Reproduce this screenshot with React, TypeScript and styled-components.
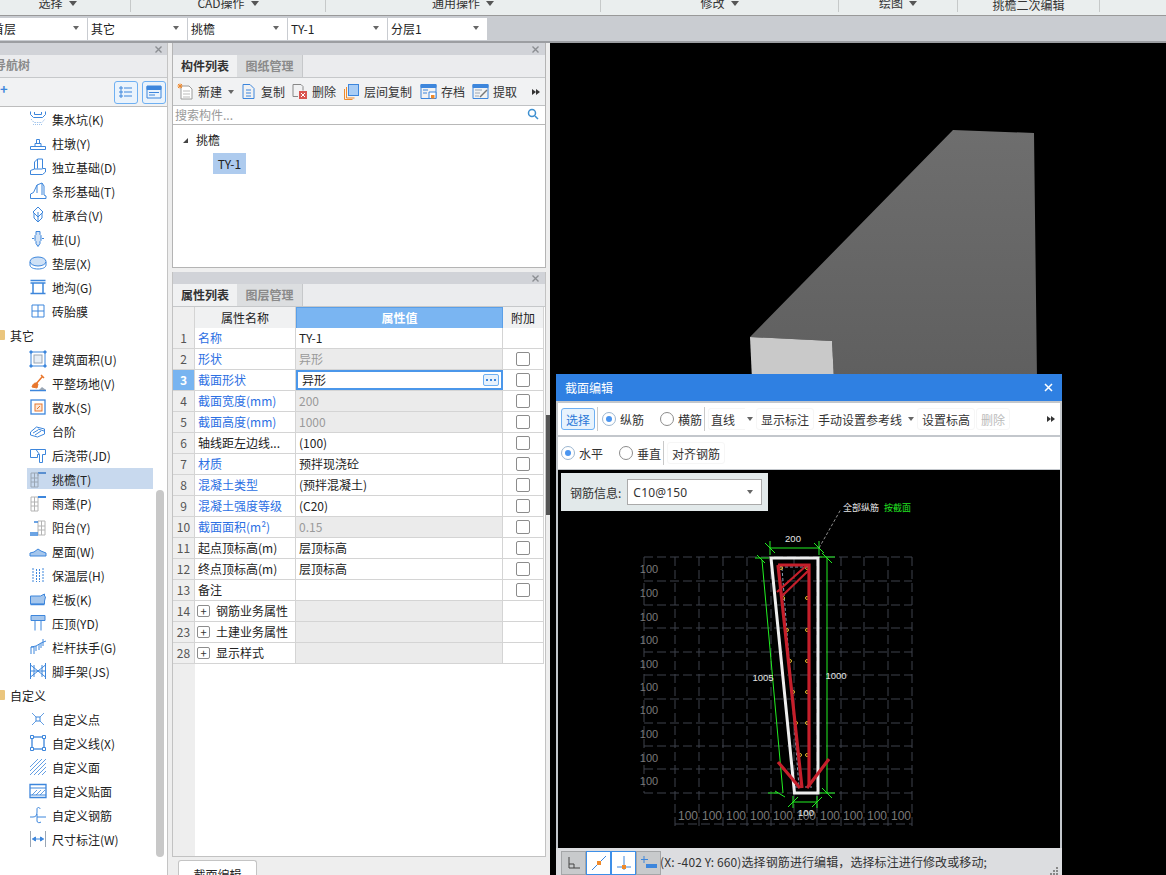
import React from "react";
import styled, { createGlobalStyle } from "styled-components";

const Global = createGlobalStyle`
  html, body { margin: 0; padding: 0; width: 1166px; height: 875px; overflow: hidden; background: #eeeeee; }
  * { box-sizing: border-box; }
  body { font-family: "Noto Sans CJK SC", "Noto Sans", sans-serif; font-size: 12px; color: #222; }
`;

const Page = styled.div`
  position: relative; width: 1166px; height: 875px; overflow: hidden;
  display: flex; flex-direction: column; background: #eee;
`;
const Ribbon = styled.div`
  height: 16px; flex: none; display: flex; overflow: hidden;
  background: #eaeeee; border-bottom: 1px solid #999;
`;
const RibbonGroup = styled.div<{ $w: number; $ml?: number }>`
  width: ${p => p.$w}px; margin-left: ${p => p.$ml ?? 0}px; height: 12px; flex: none;
  border-right: 1px solid #c6c9c9; display: flex; justify-content: center; gap: 6px;
  color: #333;
`;
const RibbonLabel = styled.span<{ $low?: boolean }>` line-height: 18px; margin-top: ${p => (p.$low ? -4 : -6)}px; height: 18px; `;
const RibbonCaret = styled.i`
  width: 0; height: 0; margin-top: 1px; border: 4px solid transparent; border-top: 5px solid #555; border-bottom: 0;
`;
const SelectBar = styled.div`
  height: 27px; flex: none; display: flex; gap: 1px; padding-top: 2px;
  background: #c9ccd1; border-bottom: 2px solid #9c9ea2;
`;
const SelectBox = styled.div<{ $first?: boolean }>`
  width: ${p => (p.$first ? 98 : 99)}px; height: 22px; flex: none; margin-left: ${p => (p.$first ? -11 : 0)}px; padding: 0 8px 2px 3px;
  background: #fff; display: flex; align-items: center; justify-content: space-between; color: #222;
`;
const SmallCaret = styled.i<{ $ml?: number }>`
  flex: none; width: 0; height: 0; margin-left: ${p => p.$ml ?? 0}px;
  border: 3px solid transparent; border-top: 4px solid #666; border-bottom: 0;
`;
const Main = styled.div` flex: 1; min-height: 0; display: flex; `;

/* left */
const Nav = styled.aside`
  position: relative; width: 168px; flex: none; display: flex; flex-direction: column;
  background: #fff; border-right: 1px solid #c4c4c4;
`;
const PanelHead = styled.div<{ $pr?: number }>`
  height: 12px; flex: none; background: #d1d3d8; display: flex; justify-content: flex-end; align-items: center;
  padding-right: ${p => p.$pr ?? 6}px;
`;
const Close = () => (
  <svg width="7" height="7" viewBox="0 0 7 7" stroke="#8b8e92" strokeWidth="1.4"><path d="M0.5 0.5l6 6M6.5 0.5l-6 6" /></svg>
);
const NavTitle = styled.div`
  height: 23px; flex: none; background: #ebecee; color: #8a8a8a; font-weight: 700; line-height: 20px;
  border-bottom: 1px solid #c6c8ca; padding-left: 0; text-indent: -6px; overflow: hidden;
`;
const NavTools = styled.div`
  height: 29px; flex: none; background: #f1f2f3; border-bottom: 1px solid #bdbdbd;
  display: flex; align-items: center; gap: 4px; padding: 0 1px 0 0;
`;
const Plus = styled.span` color: #3d86dc; font-weight: 700; font-size: 13px; margin-right: auto; line-height: 12px; margin-top: -7px; `;
const ViewBtn = styled.div`
  width: 24px; height: 23px; border: 1px solid #6fb0f2; border-radius: 3px; background: #eaf3fc;
  display: flex; align-items: center; justify-content: center;
`;
const NavList = styled.div` flex: 1; overflow: hidden; `;
const NavRow = styled.div<{ $sel?: boolean }>`
  height: 24px; display: flex; align-items: center; gap: 5px; position: relative; padding-left: 29px; z-index: 0;
  white-space: nowrap; color: #222;
  &::before {
    content: ""; position: absolute; z-index: -1; left: 27px; top: 1px; bottom: 2px; width: 126px;
    background: ${p => (p.$sel ? "#c8d9ee" : "transparent")};
  }
`;
const GroupRow = styled.div`
  height: 24px; display: flex; align-items: center; gap: 5px; white-space: nowrap;
`;
const Folder = styled.i` width: 5px; height: 10px; background: #eac57d; border-radius: 0 1px 1px 0; `;
const NavScroll = styled.div`
  position: absolute; left: 156px; top: 447px; width: 8px; height: 367px; border-radius: 4px; background: #c8c8c8;
`;

/* middle */
const Middle = styled.div`
  width: 374px; flex: none; margin-left: 4px; display: flex; flex-direction: column; background: #eee;
`;
const PanelTop = styled.section`
  height: 225px; flex: none; display: flex; flex-direction: column; background: #fff;
  border: 1px solid #b4b4b4; border-top: 0;
`;
const PanelBottom = styled.section`
  height: 585px; flex: none; margin-top: 4px; display: flex; flex-direction: column; background: #fff;
  border: 1px solid #c2c2c2; border-top: 0;
`;
const Tabs = styled.div`
  height: 23px; flex: none; display: flex; background: #ebecee; border-bottom: 1px solid #c6c8ca;
`;
const Tab = styled.div<{ $on?: boolean }>`
  width: ${p => (p.$on ? 64 : 66)}px; display: flex; align-items: center; justify-content: center; padding-bottom: 2px;
  font-weight: 700; color: ${p => (p.$on ? "#333" : "#8a8a8a")};
  background: ${p => (p.$on ? "#f0f1f2" : "#dcdee0")};
  border-right: ${p => (p.$on ? "0" : "1px solid #c6c8ca")};
`;
const ToolRow = styled.div`
  height: 28px; flex: none; display: flex; align-items: center; background: #f1f2f3; border-bottom: 1px solid #c0c2c4;
  color: #333;
`;
const Tool = styled.div<{ $ml: number }>`
  display: flex; align-items: center; gap: 4px; margin-left: ${p => p.$ml}px; white-space: nowrap;
`;
const MoreArrows = styled.div`
  display: flex; margin-left: auto; margin-right: 5px; flex: none;
  &::before, &::after { content: ""; width: 0; height: 0; border: 3px solid transparent; border-left: 4px solid #333; border-right: 0; }
`;
const Search = styled.div`
  height: 19px; flex: none; display: flex; align-items: center; justify-content: space-between; padding: 0 6px 2px 2px;
  color: #9a9a9a; border-bottom: 1px solid #b8b8b8;
`;
const Tree = styled.div` flex: 1; padding: 4px 0 0 10px; `;
const TreeHead = styled.div` display: flex; align-items: center; gap: 8px; height: 20px; `;
const TreeTri = styled.i`
  width: 0; height: 0; border-bottom: 5px solid #444; border-left: 5px solid transparent; margin-top: 2px;
`;
const TreeLeaf = styled.div`
  width: 33px; height: 21px; margin: 4px 0 0 30px; background: #aecbee; display: flex; align-items: center; justify-content: center; padding-bottom: 1px;
`;
const Row = styled.div`
  display: grid; grid-template-columns: 22px 101px 207px 41px; width: 371px; height: 21px; flex: none;
  border-bottom: 1px solid #d4d4d4; line-height: 20px;
`;
const NumCell = styled.div<{ $on?: boolean }>`
  background: ${p => (p.$on ? "#78b4f0" : "#efefef")}; color: ${p => (p.$on ? "#fff" : "#555")};
  font-weight: ${p => (p.$on ? 700 : 400)};
  font-size: 12px; text-align: center; border-right: 1px solid #d4d4d4;
`;
const NameCell = styled.div<{ $blue?: boolean; $head?: boolean }>`
  padding-left: ${p => (p.$head ? 0 : 3)}px; text-align: ${p => (p.$head ? "center" : "left")};
  color: ${p => (p.$blue ? "#2c6fe3" : "#222")}; background: ${p => (p.$head ? "#f0f1f2" : "#fff")};
  border-right: 1px solid #d4d4d4; white-space: nowrap; overflow: hidden; display: flex;
  align-items: center; justify-content: ${p => (p.$head ? "center" : "flex-start")};
`;
const ValueCell = styled.div<{ $grey?: boolean }>`
  padding-left: 3px; background: ${p => (p.$grey ? "#ebebeb" : "#fff")}; color: ${p => (p.$grey ? "#9a9a9a" : "#222")};
  border-right: 1px solid #d4d4d4; white-space: nowrap;
`;
const ValueHead = styled.div`
  background: #7ab5f2; color: #fff; font-weight: 700; text-align: center; border: 1px solid #5a9fe8;
`;
const ValueEdit = styled.div`
  border: 2px solid #4b97ea; background: #fff; display: flex; align-items: center; justify-content: space-between;
  padding: 0 2px 0 4px; line-height: 16px; color: #222;
`;
const DotsBtn = styled.span`
  width: 16px; height: 12px; border: 1px solid #6fb0f2; border-radius: 2px; background: #e8f2fc;
  display: flex; align-items: center; justify-content: center; gap: 2px;
`;
const Dot = styled.i` width: 2px; height: 2px; background: #3d86dc; display: block; `;
const ExtraCell = styled.div<{ $head?: boolean }>`
  display: flex; align-items: center; justify-content: center; background: ${p => (p.$head ? "#f0f1f2" : "#fff")};
  border-right: 1px solid #d4d4d4;
`;
const Check = styled.i`
  width: 14px; height: 14px; border: 1px solid #8c8c8c; border-radius: 2px; background: #fff; display: block;
`;
const Expander = styled.span`
  width: 13px; height: 12px; border: 1px solid #8c8c8c; border-radius: 2px; display: inline-flex; align-items: center; justify-content: center;
  font-size: 11px; line-height: 10px; margin: 0 6px 0 -1px; color: #333; flex: none;
`;
const Filler = styled.div` flex: 1; border-left: 22px solid #eee; background: #fff; `;
const BottomStrip = styled.div` flex: 1; padding: 3px 0 0 6px; background: #eee; overflow: hidden; `;
const BottomTab = styled.div`
  width: 79px; height: 24px; background: #fff; border: 1px solid #c4c4c4; border-bottom: 0; border-radius: 3px 3px 0 0;
  display: flex; align-items: center; justify-content: center; padding-top: 3px;
`;
const Gutter = styled.div` width: 4px; flex: none; background: #eee; `;
const Handle = styled.div` width: 4px; height: 100px; margin-top: 372px; background: #555; `;
const Viewport = styled.div` flex: 1; background: #000; overflow: hidden; `;
const ViewSvg = styled.svg` display: block; `;

/* dialog */
const Dialog = styled.div`
  position: absolute; left: 556px; top: 374px; width: 506px; height: 510px; background: #c3c7cc;
  display: flex; flex-direction: column; padding: 0 2px;
`;
const DialogTitle = styled.div`
  height: 27px; flex: none; margin: 0 -2px 2px; background: #2f80e2; color: #fff; padding: 0 9px;
  display: flex; align-items: center; justify-content: space-between; font-size: 12px;
`;
const DTool = styled.div<{ $mb: number }>`
  height: 32px; flex: none; margin-bottom: ${p => p.$mb}px; background: #fff; display: flex; align-items: center; color: #333;
`;
const DBtn = styled.div<{ $ml?: number; $on?: boolean; $off?: boolean }>`
  margin-left: ${p => p.$ml ?? 0}px; height: 22px; padding: 0 4px; display: flex; align-items: center; white-space: nowrap; flex: none;
  border: 1px solid ${p => (p.$on ? "#6fb0f2" : "#f6f6f6")}; border-radius: 3px;
  background: ${p => (p.$on ? "#e8f3fd" : "#fff")};
  color: ${p => (p.$on ? "#2a78d8" : p.$off ? "#bbb" : "#333")};
`;
const DSep = styled.i<{ $ml?: number }>` width: 1px; height: 24px; background: #c9c9c9; margin-left: ${p => p.$ml ?? 0}px; flex: none; `;
const RadioWrap = styled.label<{ $ml: number }>`
  display: flex; align-items: center; gap: 4px; margin-left: ${p => p.$ml}px; white-space: nowrap; flex: none;
`;
const Radio = styled.i<{ $on?: boolean }>`
  width: 14px; height: 14px; border-radius: 50%; border: 1px solid ${p => (p.$on ? "#9cb6d0" : "#8c8c8c")}; background: #fff;
  display: flex; align-items: center; justify-content: center;
  &::after { content: ""; width: 6px; height: 6px; border-radius: 50%; background: ${p => (p.$on ? "#4a95f0" : "transparent")}; }
`;
const ComboText = styled.div<{ $ml?: number; $w?: number }>`
  margin-left: ${p => p.$ml ?? 0}px; width: ${p => (p.$w ? p.$w + "px" : "auto")}; height: 22px; padding-left: 2px; flex: none;
  display: flex; align-items: center; white-space: nowrap; border: 1px solid #f6f6f6; border-right: 0; border-radius: 3px 0 0 3px;
`;
const PlainLabel = styled.span` margin-left: 4px; flex: none; `;
const Canvas = styled.div` position: relative; height: 378px; flex: none; background: #000; overflow: hidden; `;
const SectionSvg = styled.svg` display: block; `;
const InfoPanel = styled.div`
  position: absolute; left: 3px; top: 3px; width: 207px; height: 38px; background: #e2e9ea;
  display: flex; align-items: center; padding-left: 9px; gap: 6px; color: #333;
`;
const InfoSelect = styled.div`
  width: 135px; height: 26px; background: #fff; border: 1px solid #aaa; display: flex; align-items: center; justify-content: space-between;
  padding: 0 8px 0 5px; color: #333; font-family: "Noto Sans", sans-serif; letter-spacing: 0.2px;
`;
const Status = styled.div`
  height: 27px; flex: none; margin: 0 -2px; padding-left: 5px; background: #dcdde0; display: flex; align-items: flex-start; color: #333;
  position: relative;
`;
const SnapBtn = styled.div<{ $on?: boolean }>`
  width: 25px; height: 24px; margin-top: 3px; flex: none; display: flex; align-items: center; justify-content: center;
  background: ${p => (p.$on ? "#fff" : "#c8cacc")}; border: 1px solid ${p => (p.$on ? "#3d8fe8" : "#a4a6a8")};
`;
const StatusText = styled.div` margin: 5px 0 0 -1px; white-space: nowrap; line-height: 18px; letter-spacing: 0.1px; `;
const Grip = styled.svg` position: absolute; right: 3px; bottom: 0; `;

const Ic = styled.svg` width: 18px; height: 18px; flex: none; fill: none; stroke: #3d86dc; stroke-width: 1; `;
const TI = styled.svg` width: 17px; height: 17px; flex: none; fill: none; stroke-width: 1; `;

const B = "#3d86dc", G = "#9aa6b4", O = "#e8762c";
const icons: Record<string, React.ReactNode> = {
  pit: <><path d="M1.5 1.5v3l3 3h9l3-3v-3" /><path d="M5.5 2v2.5h7V2" /><path d="M2 9l3 3.5h8l3-3.5" stroke="#9fc3ec" strokeDasharray="1.5 1" /><path d="M4 14.5h10" stroke="#9fc3ec" strokeDasharray="1 1" /></>,
  pier: <><path d="M1.5 12.5h15v3h-15z" /><path d="M6 12.5v-3h6v3M7.5 9.5V5.5h3v4" /></>,
  found: <><path d="M1.5 16.5v-4l4-1.5V4l3-3h5v9.5h3v3.5l-3 2.5z" /><path d="M5.5 11h8M8.5 1v9.5" /></>,
  strip: <><path d="M1.5 16.5v-4.5l3-1.5L8 3l5-2 2 3v9l2 1v2.5z" /><path d="M13 1v12M8 3v8" /></>,
  cap: <><path d="M9 1l5 5-5 5-5-5z" /><path d="M5 7v5l4 4 4-4V7M9 6v10" /></>,
  pile: <><path d="M7 1.5h4v3l1 1v5l-1 1v2l-2 3-2-3v-2l-1-1v-5l1-1z" fill="#cfe1f6" /><path d="M3 8.5h2M13 8.5h2" /></>,
  pad: <><ellipse cx="9" cy="7.5" rx="8" ry="4.5" fill="#cfe1f6" /><path d="M1 8v3c0 2.5 3.5 4 8 4s8-1.5 8-4V8" /></>,
  trench: <><path d="M1.5 2.5h15M1.5 5h15" strokeWidth="1.5" /><path d="M4 5v10M14 5v10M1.5 15.5h15" strokeWidth="1.5" /></>,
  brick: <path d="M3 3h12v12H3zM9 3v12M3 9h12" />,
  area: <><rect x="2" y="2" width="14" height="14" /><rect x="5" y="5" width="8" height="8" stroke={G} fill="#e8eef5" /><path d="M1 1h2v2H1zM15 1h2v2h-2zM1 15h2v2H1zM15 15h2v2h-2z" fill={B} /></>,
  level: <><path d="M7 10l6-7M12 1l3 3" stroke={O} strokeWidth="1.5" /><path d="M3 13c1-4 4-5 6-3l-1 4z" fill={O} stroke={O} /><path d="M1 16.5h16" stroke={B} strokeWidth="1.5" /><path d="M10 16l3-3 4 3z" fill="#9aa6b4" stroke="none" /></>,
  apron: <><rect x="2" y="2" width="14" height="14" strokeWidth="1.3" /><rect x="6" y="6" width="7" height="7" stroke={O} fill="#fbe6d6" /><path d="M11 8l-3 3" stroke={O} /></>,
  step: <><path d="M1.5 10l6-5 8 2v5l-7 3-7-2z" /><path d="M4 11l5-3M6 13l6-4M9 7l6 2" /></>,
  band: <><path d="M1.5 3.5h15v5h-3v8h-3v-8h-2v3h-7z" fill="#fff" /><path d="M7 3.5l3.5 5" /></>,
  eave: <><path d="M2 3h7v14H2zM2 8h7M2 12h7M5.5 3v14" stroke={G} /><path d="M9 3h8" stroke="#5a8fd0" strokeWidth="2" /><path d="M9 3v3" stroke={G} /></>,
  canopy: <><path d="M2 3h7v14H2zM2 8h7M2 12h7M5.5 3v14" stroke="#b4b4b4" /><path d="M9 3h8" stroke={B} strokeWidth="2" /></>,
  balcony: <><path d="M9 3h7v14H9zM9 8h7M9 12h7M12.5 3v14" stroke="#b4b4b4" /><path d="M1 15h8M1 17h8M5 4h4" stroke={B} strokeWidth="1.5" /></>,
  roof: <path d="M1 14v-3l4-1 4-3 3 2 5 2v3z" fill="#a5c6ec" strokeWidth="1" />,
  insul: <path d="M4 2v14M14 2v14M7.5 3v13M10.5 3v13" strokeDasharray="2 1" />,
  parapet: <><path d="M1.5 6h10l4-2v2l1 1-1 4v3h-14z" fill="#a5c6ec" /><path d="M1.5 14.5h14" strokeWidth="1.5" /></>,
  coping: <><path d="M2 1.5h14v5H2z" fill="#a5c6ec" /><path d="M6 6.5v10M12 6.5v10" /></>,
  rail: <><path d="M2 16V9l5-1v5M7 8l5-3v5M12 5l5-2M2 9h3M5 9v7M10 6v6M14 1v7" /></>,
  scaffold: <><path d="M1.5 1v16M16.5 1v16M1.5 3l15 12M16.5 3l-15 12M5 3v12M13 3v12M1.5 9h15" /></>,
  point: <><path d="M3 3l12 12M15 3L3 15" strokeWidth="0.8" /><rect x="7" y="7" width="4" height="4" fill="#fff" /></>,
  line: <><rect x="3" y="3" width="12" height="12" strokeWidth="1.3" /><path d="M1.5 1.5h3v3h-3zM13.5 1.5h3v3h-3zM1.5 13.5h3v3h-3zM13.5 13.5h3v3h-3z" fill="#fff" /></>,
  face: <path d="M1 9l8-8M1 13l12-12M1 17L17 1M5 17L17 5M9 17l8-8M13 17l4-4" strokeWidth="0.8" />,
  stick: <><path d="M1 2.5h16v13H1z" strokeWidth="1.3" /><path d="M1 6h16" /><path d="M3 13l5-5M7 13l5-5M11 13l5-5" strokeWidth="0.8" /><path d="M1 13h16" /></>,
  rebar: <><path d="M1 11h3c3 0 4-2 4-5V3c0-2 3-2 3 0M8 8v7c0 2 3 2 4 1M8 11h9" /></>,
  dim: <><path d="M1.5 1v16M16.5 1v16" stroke={G} /><path d="M3.5 9h11M3.5 9l3-2v4zM14.5 9l-3-2v4z" fill={B} /></>,
};

const rows: any[] = [
  [1, "名称", "TY-1", { blue: 1, noCheck: 1 }],
  [2, "形状", "异形", { blue: 1, grey: 1 }],
  [3, "截面形状", "异形", { blue: 1, edit: 1 }],
  [4, "截面宽度(mm)", "200", { blue: 1, grey: 1 }],
  [5, "截面高度(mm)", "1000", { blue: 1, grey: 1 }],
  [6, "轴线距左边线...", "(100)", {}],
  [7, "材质", "预拌现浇砼", { blue: 1 }],
  [8, "混凝土类型", "(预拌混凝土)", { blue: 1 }],
  [9, "混凝土强度等级", "(C20)", { blue: 1 }],
  [10, "截面面积(m²)", "0.15", { blue: 1, grey: 1 }],
  [11, "起点顶标高(m)", "层顶标高", {}],
  [12, "终点顶标高(m)", "层顶标高", {}],
  [13, "备注", "", {}],
  [14, "钢筋业务属性", "", { group: 1 }],
  [23, "土建业务属性", "", { group: 1 }],
  [28, "显示样式", "", { group: 1 }],
];

const nav: [string, string, boolean?][] = [
  ["集水坑(K)", "pit"], ["柱墩(Y)", "pier"], ["独立基础(D)", "found"], ["条形基础(T)", "strip"], ["桩承台(V)", "cap"],
  ["桩(U)", "pile"], ["垫层(X)", "pad"], ["地沟(G)", "trench"], ["砖胎膜", "brick"],
];
const nav2: [string, string, boolean?][] = [
  ["建筑面积(U)", "area"], ["平整场地(V)", "level"], ["散水(S)", "apron"], ["台阶", "step"], ["后浇带(JD)", "band"], ["挑檐(T)", "eave", true],
  ["雨蓬(P)", "canopy"], ["阳台(Y)", "balcony"], ["屋面(W)", "roof"], ["保温层(H)", "insul"], ["栏板(K)", "parapet"], ["压顶(YD)", "coping"],
  ["栏杆扶手(G)", "rail"], ["脚手架(JS)", "scaffold"],
];
const nav3: [string, string, boolean?][] = [
  ["自定义点", "point"], ["自定义线(X)", "line"], ["自定义面", "face"], ["自定义贴面", "stick"], ["自定义钢筋", "rebar"], ["尺寸标注(W)", "dim"],
];
const renderNav = (list: [string, string, boolean?][]) =>
  list.map(([t, ic, sel]) => (
    <NavRow key={t} $sel={sel}>
      <Ic viewBox="0 0 18 18">{icons[ic]}</Ic>
      <span>{t}</span>
    </NavRow>
  ));

const hy = [557, 581, 605, 628, 652, 675, 699, 723, 746, 769, 793];
const vx = [675, 699, 723, 747, 771, 794, 817, 841, 864, 888, 912];
const ly = [569, 593, 617, 640, 664, 687, 710, 734, 758, 781];
const bx = [688, 712, 736, 760, 783, 806, 830, 853, 877, 901];
const dy = [598, 630, 661, 692, 723, 755];
const dl = [783, 787, 790, 793, 796, 800];

const Section = () => (
  <SectionSvg width="502" height="378" viewBox="558 470 502 378" fontFamily="Liberation Sans, sans-serif">
    <g stroke="#3f434c" strokeWidth="1" strokeDasharray="9 4" fill="none">
      {hy.map(y => <path key={y} d={`M644 ${y}H912`} />)}
      <path d="M675 824H912" />
      <path d="M644 557V793" />
      {vx.map(x => <path key={x} d={`M${x} 557V826`} />)}
    </g>
    <g fill="#7a7a7a" textAnchor="middle">
      <g fontSize="11">{ly.map(y => <text key={y} x="649" y={y + 4}>100</text>)}</g>
      <g fontSize="12">{bx.map(x => <text key={x} x={x} y="820">100</text>)}</g>
    </g>
    <g stroke="#22f022" strokeWidth="1" fill="none">
      <path d="M770 548H819M770 541v14M819 541v14M765 543l10 10M814 543l10 10" />
      <path d="M827 558V793M819 557h16M819 793h16M822 788l10 10M822 553l10 10" />
      <path d="M762 560L783 793M755 558h14M778 793h-10M775 791l10 6M757 555l8 8" />
      <path d="M793 802H817M793 796v12M817 796v12M788 807l10-10M812 807l10-10" />
    </g>
    <path d="M771 558H818V793H794.5Z" fill="none" stroke="#eeeeee" strokeWidth="3" />
    <path d="M782 568L799 787M809 568V787M780 567H810M795 787H812" fill="none" stroke="#a9c4e4" strokeWidth="0.8" strokeDasharray="3 2" />
    <g fill="none" stroke="#e6bd2e" strokeWidth="1">
      <circle cx="781" cy="568" r="1.5" />
      <circle cx="807" cy="568" r="1.5" />
      {dy.map((y, i) => <circle key={y} cx={dl[i]} cy={y} r="1.5" />)}
      {dy.map(y => <circle key={y} cx="807" cy={y} r="1.5" />)}
    </g>
    <g fill="none" stroke="#c51f2b" strokeWidth="3.2">
      <path d="M778 565H809V787" />
      <path d="M778 565L781 592L802 788" />
      <path d="M807 565L777 592M809 570L782 596" strokeWidth="2.2" />
      <path d="M778 762L800 788M829 759L807 788" />
    </g>
    <path d="M819 548L841 509" stroke="#8d8d8d" strokeDasharray="3 2" fill="none" />
    <text x="843" y="511" fill="#e6e6e6" fontSize="9" fontFamily="Noto Sans CJK SC, sans-serif">全部纵筋</text>
    <text x="884" y="511" fill="#22e022" fontSize="9" fontFamily="Noto Sans CJK SC, sans-serif">按截面</text>
    <g fill="#e4e4e4" fontSize="9.5" textAnchor="middle">
      <text x="793" y="542">200</text>
      <text x="836" y="679">1000</text>
      <text x="763" y="681">1005</text>
      <text x="806" y="816">100</text>
    </g>
  </SectionSvg>
);

export default function App() {
  return (
    <Page>
      <Global />
      <Ribbon>
        {[["选择", 146, -15], ["CAD操作", 195], ["通用操作", 275], ["修改", 238], ["绘图", 119]].map(([t, w, ml]) => (
          <RibbonGroup key={t as string} $w={w as number} $ml={ml as number | undefined}>
            <RibbonLabel>{t}</RibbonLabel><RibbonCaret />
          </RibbonGroup>
        ))}
        <RibbonGroup $w={142}><RibbonLabel $low>挑檐二次编辑</RibbonLabel></RibbonGroup>
      </Ribbon>
      <SelectBar>
        {["首层", "其它", "挑檐", "TY-1", "分层1"].map((t, i) => (
          <SelectBox key={t} $first={i === 0}>{t}<SmallCaret /></SelectBox>
        ))}
      </SelectBar>
      <Main>
        <Nav>
          <PanelHead $pr={5}><Close /></PanelHead>
          <NavTitle>导航树</NavTitle>
          <NavTools>
            <Plus>+</Plus>
            <ViewBtn>
              <svg width="14" height="14" viewBox="0 0 14 14" fill="none" stroke="#3d86dc"><path d="M1 2h2v2H1zM1 6h2v2H1zM1 10h2v2H1zM5 3h8M5 7h8M5 11h8" /></svg>
            </ViewBtn>
            <ViewBtn>
              <svg width="16" height="14" viewBox="0 0 16 14" fill="none" stroke="#3d86dc"><path d="M1 1h14v12H1z" /><path d="M1 1.5h14v3H1z" fill="#3d86dc" /><path d="M3 7.5h10M3 10h6" /></svg>
            </ViewBtn>
          </NavTools>
          <NavList>
            {renderNav(nav)}
            <GroupRow><Folder />其它</GroupRow>
            {renderNav(nav2)}
            <GroupRow><Folder />自定义</GroupRow>
            {renderNav(nav3)}
          </NavList>
          <NavScroll />
        </Nav>
        <Middle>
          <PanelTop>
            <PanelHead><Close /></PanelHead>
            <Tabs><Tab $on>构件列表</Tab><Tab>图纸管理</Tab></Tabs>
            <ToolRow>
              <Tool $ml={4}>
                <TI viewBox="0 0 17 17"><path d="M4 3h8l3 3v10H4z" stroke="#9a9a9a" fill="#fff" /><path d="M1 1l4 4M5 1L1 5M3 .5v5M.5 3h5" stroke="#f0892c" /><path d="M6 8h7M6 11h7M6 14h7" stroke="#bbb" /></TI>
                新建<SmallCaret $ml={2} />
              </Tool>
              <Tool $ml={6}>
                <TI viewBox="0 0 17 17"><path d="M3 1.5h7l4 4v10H3z" stroke={B} /><path d="M6 7h5M6 10h5M6 13h5" stroke={B} /></TI>
                复制
              </Tool>
              <Tool $ml={6}>
                <TI viewBox="0 0 17 17"><path d="M2 1.5h8l2 2v4M2 1.5v12h5" stroke="#888" /><rect x="8" y="8" width="8" height="8" fill="#d9534f" /><path d="M10 10l4 4M14 10l-4 4" stroke="#fff" /></TI>
                删除
              </Tool>
              <Tool $ml={7}>
                <TI viewBox="0 0 17 17"><rect x="5.5" y="1.5" width="10" height="11" fill="#a9cdf5" stroke={B} /><path d="M3.5 4v11h8M1.5 6v10.5h8" stroke="#ef8a2a" /></TI>
                层间复制
              </Tool>
              <Tool $ml={8}>
                <TI viewBox="0 0 17 17"><path d="M1 1.5h15v14H1z" stroke={B} /><path d="M1 1.5h15v3H1z" fill={B} stroke={B} /><path d="M3 7h5M3 10h4" stroke={B} /><path d="M9 9h7v6.5H9z" stroke={B} fill="#fff" /><rect x="11" y="12" width="3.5" height="3.5" fill="#ef8a2a" /></TI>
                存档
              </Tool>
              <Tool $ml={7}>
                <TI viewBox="0 0 17 17"><path d="M1 1.5h15v14H1z" stroke={B} /><path d="M1 1.5h15v3H1z" fill={B} stroke={B} /><path d="M3 7h7M3 10h5M3 13h4" stroke={G} /><path d="M8 14l7-7" stroke="#777" strokeWidth="1.5" /></TI>
                提取
              </Tool>
              <MoreArrows />
            </ToolRow>
            <Search>
              搜索构件...
              <svg width="12" height="12" viewBox="0 0 12 12" fill="none" stroke="#3d8fd0" strokeWidth="1.5"><circle cx="5" cy="5" r="3.5" /><path d="M8 8l3 3" /></svg>
            </Search>
            <Tree>
              <TreeHead><TreeTri />挑檐</TreeHead>
              <TreeLeaf>TY-1</TreeLeaf>
            </Tree>
          </PanelTop>
          <PanelBottom>
            <PanelHead><Close /></PanelHead>
            <Tabs><Tab $on>属性列表</Tab><Tab>图层管理</Tab></Tabs>
            <Row>
              <NumCell />
              <NameCell $head>属性名称</NameCell>
              <ValueHead>属性值</ValueHead>
              <ExtraCell $head>附加</ExtraCell>
            </Row>
            {rows.map(([n, name, val, o]) => (
              <Row key={n}>
                <NumCell $on={!!o.edit}>{n}</NumCell>
                <NameCell $blue={!!o.blue}>
                  {o.group ? <Expander>+</Expander> : null}
                  {name}
                </NameCell>
                {o.edit ? (
                  <ValueEdit>{val}<DotsBtn><Dot /><Dot /><Dot /></DotsBtn></ValueEdit>
                ) : (
                  <ValueCell $grey={!!o.grey || !!o.group}>{val}</ValueCell>
                )}
                <ExtraCell>{o.noCheck || o.group ? null : <Check />}</ExtraCell>
              </Row>
            ))}
            <Filler />
          </PanelBottom>
          <BottomStrip><BottomTab>截面编辑</BottomTab></BottomStrip>
        </Middle>
        <Gutter><Handle /></Gutter>
        <Viewport>
          <ViewSvg width="616" height="832" viewBox="550 43 616 832">
            <defs>
              <linearGradient id="g3d" x1="0" y1="0" x2="0" y2="1">
                <stop offset="0" stopColor="#6e6e6e" />
                <stop offset="1" stopColor="#5f5f5f" />
              </linearGradient>
            </defs>
            <path d="M750 337L953 130L1034 133L1037 380H834L832 341Z" fill="url(#g3d)" />
            <path d="M750 337L832 341L834 380H752Z" fill="#c9c9c9" />
          </ViewSvg>
        </Viewport>
      </Main>
      <Dialog>
        <DialogTitle>
          截面编辑
          <svg width="9" height="9" viewBox="0 0 9 9" stroke="#fff" strokeWidth="1.5"><path d="M1 1l7 7M8 1L1 8" /></svg>
        </DialogTitle>
        <DTool $mb={2}>
          <DBtn $ml={3} $on>选择</DBtn>
          <DSep $ml={2} />
          <RadioWrap $ml={4}><Radio $on />纵筋</RadioWrap>
          <RadioWrap $ml={16}><Radio />横筋</RadioWrap>
          <DSep $ml={2} />
          <ComboText $ml={3} $w={37}>直线</ComboText>
          <SmallCaret $ml={2} />
          <DBtn $ml={3}>显示标注</DBtn>
          <PlainLabel>手动设置参考线</PlainLabel>
          <SmallCaret $ml={6} />
          <DBtn $ml={3}>设置标高</DBtn>
          <DBtn $ml={1} $off>删除</DBtn>
          <MoreArrows />
        </DTool>
        <DTool $mb={1}>
          <RadioWrap $ml={3}><Radio $on />水平</RadioWrap>
          <RadioWrap $ml={16}><Radio />垂直</RadioWrap>
          <DSep $ml={2} />
          <DBtn $ml={3}>对齐钢筋</DBtn>
        </DTool>
        <Canvas>
          <Section />
          <InfoPanel>
            钢筋信息:
            <InfoSelect>C10@150<SmallCaret /></InfoSelect>
          </InfoPanel>
        </Canvas>
        <Status>
          <SnapBtn>
            <svg width="14" height="14" viewBox="0 0 14 14" fill="none" stroke="#444"><path d="M2 1v11h11M2 8h5v4" /></svg>
          </SnapBtn>
          <SnapBtn $on>
            <svg width="16" height="16" viewBox="0 0 16 16" fill="none" stroke="#3d86dc"><path d="M1 15L15 1" /><rect x="6" y="6" width="4" height="4" fill="#ef8a2a" stroke="none" /></svg>
          </SnapBtn>
          <SnapBtn $on>
            <svg width="16" height="16" viewBox="0 0 16 16" fill="none" stroke="#3d86dc"><path d="M8 1v14M1 12h14" /><rect x="6" y="10" width="4" height="4" fill="#ef8a2a" stroke="none" /></svg>
          </SnapBtn>
          <SnapBtn>
            <svg width="18" height="16" viewBox="0 0 18 16" fill="none" stroke="#3d86dc"><path d="M4 1v7M1 4.5h7" /><rect x="6" y="9" width="11" height="4" fill="#3d86dc" stroke="none" /></svg>
          </SnapBtn>
          <StatusText>(X: -402 Y: 660)选择钢筋进行编辑，选择标注进行修改或移动;</StatusText>
          <Grip width="10" height="8" viewBox="0 0 10 8" fill="#888">
            <rect x="7" y="0" width="2" height="2" /><rect x="4" y="3" width="2" height="2" /><rect x="7" y="3" width="2" height="2" />
            <rect x="1" y="6" width="2" height="2" /><rect x="4" y="6" width="2" height="2" /><rect x="7" y="6" width="2" height="2" />
          </Grip>
        </Status>
      </Dialog>
    </Page>
  );
}
